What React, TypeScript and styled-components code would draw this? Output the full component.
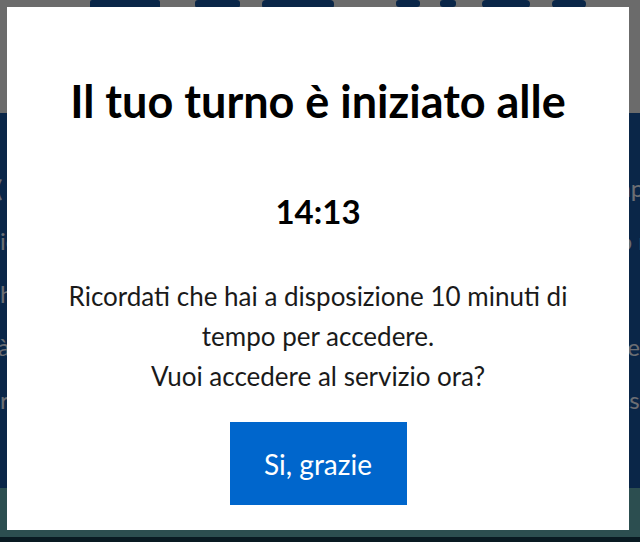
import styled, { createGlobalStyle } from 'styled-components'

const GlobalStyle = createGlobalStyle`
  html, body {
    margin: 0;
    padding: 0;
    height: 100%;
    overflow: hidden;
  }
  body {
    font-family: Lato, "Open Sans", sans-serif;
  }
`

const Page = styled.div`
  position: relative;
  width: 640px;
  height: 542px;
  overflow: hidden;
  display: flex;
  flex-direction: column;
`

const Header = styled.header`
  height: 113px;
  background: #eeeeee;
  flex: none;
  display: flex;
  align-items: flex-start;
`

const Main = styled.main`
  height: 375px;
  background: #17549f;
  flex: none;
  display: flex;
  flex-direction: column;
  gap: 24px;
  padding-top: 60px;
  box-sizing: border-box;
  overflow: hidden;
`

const BgLine = styled.p<{ $indent?: number }>`
  margin: 0;
  color: #f0f4ff;
  font-size: 24px;
  white-space: nowrap;
  text-indent: ${p => p.$indent || 0}px;
`

const Footer = styled.footer`
  height: 49px;
  background: #62adb2;
  flex: none;
`

const FooterBottom = styled.div`
  flex: 1;
  background: #163a4c;
`

const Backdrop = styled.div`
  position: absolute;
  inset: 0;
  background: rgba(0, 0, 0, 0.55);
  display: flex;
  align-items: flex-start;
  justify-content: center;
  padding-top: 7px;
`

const Modal = styled.div`
  width: 622px;
  height: 523px;
  background: #ffffff;
  box-sizing: border-box;
  margin-left: -4px;
  display: flex;
  flex-direction: column;
  align-items: center;
  text-align: center;
  color: #111111;
  padding-top: 68px;
`

const Title = styled.h2`
  margin: 0;
  font-size: 45px;
  font-weight: 700;
  line-height: 52px;
  color: #000;
  white-space: nowrap;
`

const Time = styled.div`
  margin-top: 64px;
  font-size: 33px;
  font-weight: 700;
  line-height: 40px;
  color: #000;
`

const Message = styled.p`
  margin: 45px 0 0;
  font-size: 26px;
  line-height: 40px;
  width: 530px;
  color: #1a1a1a;
`

const Button = styled.button`
  margin-top: 26px;
  width: 177px;
  height: 83px;
  border: none;
  border-radius: 0;
  background: #0066cc;
  color: #ffffff;
  font-family: inherit;
  font-size: 28px;
  cursor: pointer;
`

function Logo() {
  return (
    <svg width="640" height="20" viewBox="0 0 640 20">
      <g fill="#17549f">
        <rect x="90" y="0" width="70" height="9" rx="2" />
        <rect x="195" y="0" width="45" height="8" rx="3" />
        <rect x="262" y="0" width="72" height="9" rx="4" />
        <rect x="396" y="0" width="24" height="7" rx="3" />
        <rect x="440" y="0" width="16" height="7" rx="3" />
        <rect x="482" y="0" width="48" height="8" rx="4" />
        <rect x="552" y="0" width="34" height="8" rx="4" />
      </g>
    </svg>
  )
}

export default function App() {
  return (
    <>
      <GlobalStyle />
      <Page>
        <Header>
          <Logo />
        </Header>
        <Main>
          <BgLine $indent={-4}>( Il servizio di prenotazione è attivo dal lunedì al venerdì, sempre i</BgLine>
          <BgLine>io dalle ore 8.00 alle ore 18.00 per tutti gli utenti che si sono registrati</BgLine>
          <BgLine>h</BgLine>
          <BgLine $indent={-2}>à disponibile il servizio in modalità prioritaria per chi accede ee</BgLine>
          <BgLine>r consultare le informazioni utili e le modalità di accesso al sistema pe</BgLine>
        </Main>
        <Footer />
        <FooterBottom />
        <Backdrop>
          <Modal role="dialog">
            <Title>Il tuo turno è iniziato alle</Title>
            <Time>14:13</Time>
            <Message>
              Ricordati che hai a disposizione 10 minuti di tempo per accedere.
              <br />
              Vuoi accedere al servizio ora?
            </Message>
            <Button>Si, grazie</Button>
          </Modal>
        </Backdrop>
      </Page>
    </>
  )
}
